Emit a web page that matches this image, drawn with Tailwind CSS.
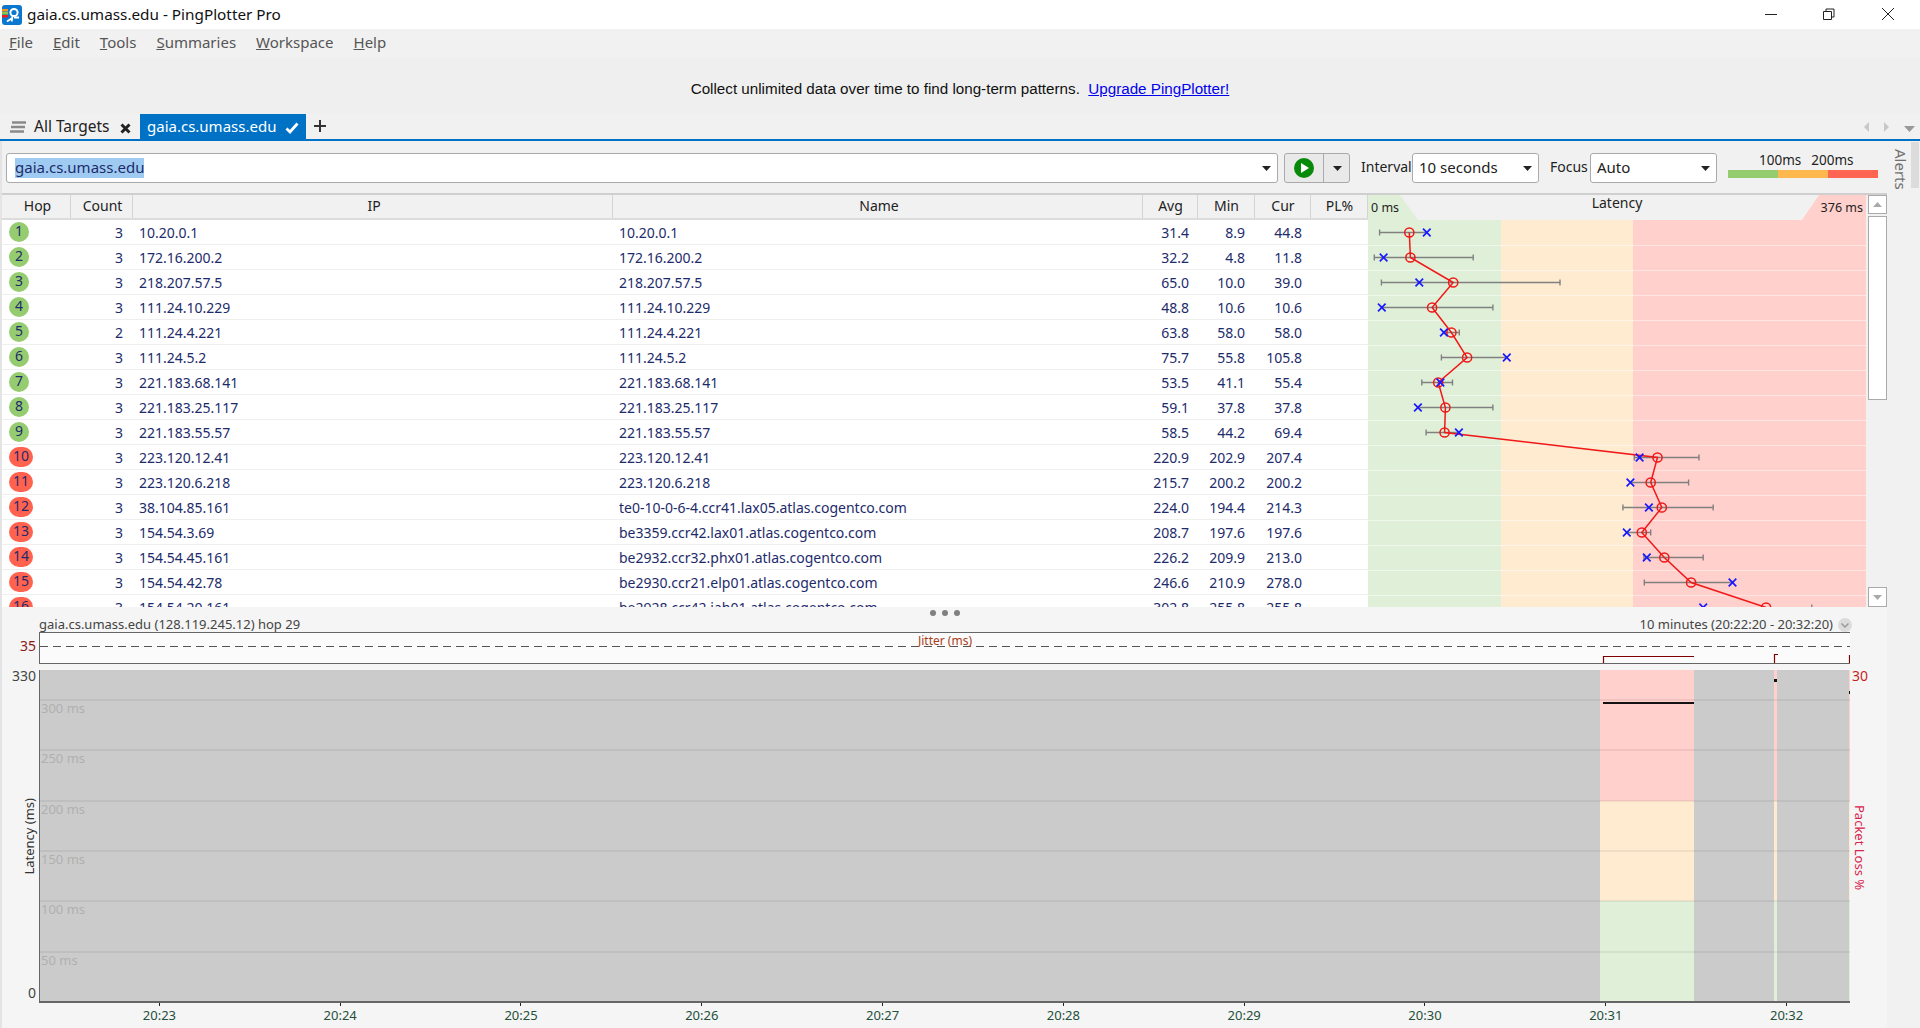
<!DOCTYPE html>
<html>
<head>
<meta charset="utf-8">
<script src="https://cdn.jsdelivr.net/npm/@tailwindcss/browser@4"></script>
</head>
<body class="m-0 bg-white overflow-hidden">
<div class="w-[1920px] h-[1028px] flex flex-col overflow-hidden font-['Noto_Sans',sans-serif] text-[14px] text-[#222]">

  <!-- title bar -->
  <div class="h-[29px] shrink-0 bg-white flex items-center relative">
    <svg class="ml-[2px] mr-[5px]" width="20" height="20" viewBox="0 0 20 20"><rect width="20" height="20" rx="3" fill="#0b78d0"/><rect x="0" y="4" width="6" height="2.5" fill="#f7941d"/><rect x="0" y="7" width="6" height="2.5" fill="#8dc63f"/><rect x="0" y="10" width="6" height="2.5" fill="#ed1c24"/><circle cx="12" cy="7.5" r="3.6" fill="none" stroke="#fff" stroke-width="2"/><path d="M10.500 11l-.8 5.500M9.500 13.500l-4.500 3M12 12.500h5" fill="none" stroke="#fff" stroke-width="1.800"/></svg>
    <span class="text-[15.3px] text-[#111]">gaia.cs.umass.edu - PingPlotter Pro</span>
    <div class="ml-auto flex items-center h-full">
      <svg width="58" height="29" viewBox="0 0 58 29"><path d="M6 14.500h12" stroke="#222" stroke-width="1"/></svg>
      <svg width="65" height="29" viewBox="0 0 65 29"><path d="M6.500 11.500h8v8h-8zM9 11.500V9h8v8h-2.500" fill="none" stroke="#222" stroke-width="1"/></svg>
      <svg width="38" height="29" viewBox="0 0 38 29"><path d="M0 8l12 12M12 8L0 20" stroke="#222" stroke-width="1"/></svg>
    </div>
  </div>

  <!-- menu -->
  <div class="h-[29px] shrink-0 bg-[#f1f1f1] flex items-center pl-[9px] pb-[2px] gap-[20px] text-[15px] text-[#555]">
    <span><u>F</u>ile</span><span><u>E</u>dit</span><span><u>T</u>ools</span><span><u>S</u>ummaries</span><span><u>W</u>orkspace</span><span><u>H</u>elp</span>
  </div>

  <!-- banner -->
  <div class="h-[56px] shrink-0 bg-[#efefef] flex items-center justify-center pt-[7px] font-['Liberation_Sans',sans-serif] text-[15.2px] text-[#111]">
    <span>Collect unlimited data over time to find long-term patterns.&nbsp; <a class="text-[#0000ee] underline">Upgrade PingPlotter!</a></span>
  </div>

  <!-- tabs -->
  <div class="h-[25px] shrink-0 bg-[#f1f1f1] flex items-stretch">
    <div class="w-[140px] flex items-center pl-[10px]">
      <svg width="16" height="12" viewBox="0 0 16 12" class="mr-[8px]"><path d="M2 1.500h14M1 6h14M0 10.500h14" stroke="#8a8a8a" stroke-width="2.400"/></svg>
      <span class="text-[15.5px] text-[#222] w-[86px]">All Targets</span>
      <svg width="11" height="11" viewBox="0 0 11 11" class="mt-[3px]"><path d="M1.500 1.500l8 8M9.500 1.500l-8 8" stroke="#222" stroke-width="3"/></svg>
    </div>
    <div class="w-[166px] bg-[#0072c6] flex items-center pl-[7px] text-white text-[15px]">
      <span class="w-[138px]">gaia.cs.umass.edu</span>
      <svg width="14" height="12" viewBox="0 0 14 12" class="mt-[3px]"><path d="M1.500 6.500l3.500 3.500 7.500-8.500" fill="none" stroke="#fff" stroke-width="2.800"/></svg>
    </div>
    <svg width="14" height="14" viewBox="0 0 14 14" class="ml-[7px] mt-[5px]"><path d="M7 1v12M1 7h12" stroke="#333" stroke-width="2"/></svg>
    <div class="ml-auto flex items-center pr-[5px] gap-[14px] pt-[1px]">
      <svg width="6" height="10" viewBox="0 0 6 10"><path d="M5 0v10L0 5z" fill="#c8c8c8"/></svg>
      <svg width="6" height="10" viewBox="0 0 6 10"><path d="M0 0v10l5-5z" fill="#c8c8c8"/></svg>
      <svg width="11" height="6" viewBox="0 0 11 6" class="mt-[4px]"><path d="M0 0h11L5.500 6z" fill="#999"/></svg>
    </div>
  </div>
  <div class="h-[2px] shrink-0 bg-[#0072c6]"></div>

  <!-- workspace -->
  <div class="flex-1 flex min-h-0">
    <div class="w-[1887px] flex flex-col border-l-2 border-[#e4e4e4] bg-[#f1f1f1]">

      <!-- toolbar -->
      <div class="h-[52px] shrink-0 flex items-start pt-[12px] pl-[4px]">
        <div class="w-[1272px] h-[30px] bg-white border border-[#aaa] rounded-[3px] flex items-center pl-[8px] pr-[6px] text-[15px] text-[#1d2b6b]">
          <span class="bg-[#9fcbf2] h-[20px] leading-[19px]">gaia.cs.umass.edu</span>
          <svg class="ml-auto" width="9" height="5" viewBox="0 0 9 5"><path d="M0 0h9L4.500 5z" fill="#222"/></svg>
        </div>
        <div class="ml-[6px] w-[66px] h-[30px] bg-[#e9e9e9] border border-[#aaa] rounded-[3px] flex items-center">
          <div class="w-[39px] h-full border-r border-[#aaa] flex items-center justify-center">
            <svg width="20" height="20" viewBox="0 0 20 20"><circle cx="10" cy="10" r="10" fill="#078a0a"/><path d="M7 5l8 5-8 5z" fill="#fff"/></svg>
          </div>
          <svg class="ml-[9px]" width="9" height="5" viewBox="0 0 9 5"><path d="M0 0h9L4.500 5z" fill="#222"/></svg>
        </div>
        <span class="ml-[11px] w-[51px] leading-[28px] text-[14px] text-[#222]">Interval</span>
        <div class="w-[127px] h-[30px] bg-white border border-[#aaa] rounded-[3px] flex items-center pl-[6px] pr-[6px] pb-[2px] text-[15px] text-[#222]">
          <span>10 seconds</span>
          <svg class="ml-auto mt-[2px]" width="9" height="5" viewBox="0 0 9 5"><path d="M0 0h9L4.500 5z" fill="#222"/></svg>
        </div>
        <span class="ml-[11px] w-[40px] leading-[28px] text-[14px] text-[#222]">Focus</span>
        <div class="w-[127px] h-[30px] bg-white border border-[#aaa] rounded-[3px] flex items-center pl-[6px] pr-[6px] pb-[2px] text-[15px] text-[#222]">
          <span>Auto</span>
          <svg class="ml-auto mt-[2px]" width="9" height="5" viewBox="0 0 9 5"><path d="M0 0h9L4.500 5z" fill="#222"/></svg>
        </div>
        <div class="ml-[11px] w-[150px] -mt-[2px] flex flex-col">
          <div class="h-[18px] flex pl-[31px] gap-[10px] text-[13.5px] leading-[18px] text-[#222]"><span>100ms</span><span>200ms</span></div>
          <div class="h-[8px] mt-[1px] flex"><div class="w-[50px] bg-[#96cc70]"></div><div class="w-[50px] bg-[#ffb84d]"></div><div class="w-[50px] bg-[#ff6550]"></div></div>
        </div>
      </div>

      <!-- table -->
      <div class="h-[414px] shrink-0 border-t-2 border-[#cfcfcf] flex overflow-hidden">
        <div class="w-[1366px] shrink-0 flex flex-col bg-white text-[#1d2b6b]">
          <div class="grid grid-cols-[69px_62px_480px_530px_55px_57px_56px_57px] h-[25px] shrink-0 bg-[#f1f1f1] border-b-2 border-[#dcdcdc] text-[#222] items-stretch text-center leading-[22px]">
            <div class="border-r border-[#d4d4d4] pl-[3px]">Hop</div><div class="border-r border-[#d4d4d4] pl-[2px]">Count</div><div class="border-r border-[#d4d4d4] pl-[3px]">IP</div><div class="border-r border-[#d4d4d4] pl-[3px]">Name</div><div class="border-r border-[#d4d4d4] pl-[1px]">Avg</div><div class="border-r border-[#d4d4d4] pl-[1px]">Min</div><div class="border-r border-[#d4d4d4] pl-[1px]">Cur</div><div class="border-r border-[#d4d4d4] pl-[1px]">PL%</div>
          </div>
          <div class="grid grid-cols-[69px_62px_480px_530px_55px_57px_56px_57px] h-[25px] shrink-0 border-b border-[#efefef] items-center"><div class="pl-[7px]"><div class="w-[20px] h-[20px] rounded-full bg-[#96cc70] text-center leading-[17px]">1</div></div><div class="text-right pr-[10px]">3</div><div class="pl-[6px]">10.20.0.1</div><div class="pl-[6px]">10.20.0.1</div><div class="text-right pr-[9px]">31.4</div><div class="text-right pr-[10px]">8.9</div><div class="text-right pr-[9px]">44.8</div><div></div></div>
          <div class="grid grid-cols-[69px_62px_480px_530px_55px_57px_56px_57px] h-[25px] shrink-0 border-b border-[#efefef] items-center"><div class="pl-[7px]"><div class="w-[20px] h-[20px] rounded-full bg-[#96cc70] text-center leading-[17px]">2</div></div><div class="text-right pr-[10px]">3</div><div class="pl-[6px]">172.16.200.2</div><div class="pl-[6px]">172.16.200.2</div><div class="text-right pr-[9px]">32.2</div><div class="text-right pr-[10px]">4.8</div><div class="text-right pr-[9px]">11.8</div><div></div></div>
          <div class="grid grid-cols-[69px_62px_480px_530px_55px_57px_56px_57px] h-[25px] shrink-0 border-b border-[#efefef] items-center"><div class="pl-[7px]"><div class="w-[20px] h-[20px] rounded-full bg-[#96cc70] text-center leading-[17px]">3</div></div><div class="text-right pr-[10px]">3</div><div class="pl-[6px]">218.207.57.5</div><div class="pl-[6px]">218.207.57.5</div><div class="text-right pr-[9px]">65.0</div><div class="text-right pr-[10px]">10.0</div><div class="text-right pr-[9px]">39.0</div><div></div></div>
          <div class="grid grid-cols-[69px_62px_480px_530px_55px_57px_56px_57px] h-[25px] shrink-0 border-b border-[#efefef] items-center"><div class="pl-[7px]"><div class="w-[20px] h-[20px] rounded-full bg-[#96cc70] text-center leading-[17px]">4</div></div><div class="text-right pr-[10px]">3</div><div class="pl-[6px]">111.24.10.229</div><div class="pl-[6px]">111.24.10.229</div><div class="text-right pr-[9px]">48.8</div><div class="text-right pr-[10px]">10.6</div><div class="text-right pr-[9px]">10.6</div><div></div></div>
          <div class="grid grid-cols-[69px_62px_480px_530px_55px_57px_56px_57px] h-[25px] shrink-0 border-b border-[#efefef] items-center"><div class="pl-[7px]"><div class="w-[20px] h-[20px] rounded-full bg-[#96cc70] text-center leading-[17px]">5</div></div><div class="text-right pr-[10px]">2</div><div class="pl-[6px]">111.24.4.221</div><div class="pl-[6px]">111.24.4.221</div><div class="text-right pr-[9px]">63.8</div><div class="text-right pr-[10px]">58.0</div><div class="text-right pr-[9px]">58.0</div><div></div></div>
          <div class="grid grid-cols-[69px_62px_480px_530px_55px_57px_56px_57px] h-[25px] shrink-0 border-b border-[#efefef] items-center"><div class="pl-[7px]"><div class="w-[20px] h-[20px] rounded-full bg-[#96cc70] text-center leading-[17px]">6</div></div><div class="text-right pr-[10px]">3</div><div class="pl-[6px]">111.24.5.2</div><div class="pl-[6px]">111.24.5.2</div><div class="text-right pr-[9px]">75.7</div><div class="text-right pr-[10px]">55.8</div><div class="text-right pr-[9px]">105.8</div><div></div></div>
          <div class="grid grid-cols-[69px_62px_480px_530px_55px_57px_56px_57px] h-[25px] shrink-0 border-b border-[#efefef] items-center"><div class="pl-[7px]"><div class="w-[20px] h-[20px] rounded-full bg-[#96cc70] text-center leading-[17px]">7</div></div><div class="text-right pr-[10px]">3</div><div class="pl-[6px]">221.183.68.141</div><div class="pl-[6px]">221.183.68.141</div><div class="text-right pr-[9px]">53.5</div><div class="text-right pr-[10px]">41.1</div><div class="text-right pr-[9px]">55.4</div><div></div></div>
          <div class="grid grid-cols-[69px_62px_480px_530px_55px_57px_56px_57px] h-[25px] shrink-0 border-b border-[#efefef] items-center"><div class="pl-[7px]"><div class="w-[20px] h-[20px] rounded-full bg-[#96cc70] text-center leading-[17px]">8</div></div><div class="text-right pr-[10px]">3</div><div class="pl-[6px]">221.183.25.117</div><div class="pl-[6px]">221.183.25.117</div><div class="text-right pr-[9px]">59.1</div><div class="text-right pr-[10px]">37.8</div><div class="text-right pr-[9px]">37.8</div><div></div></div>
          <div class="grid grid-cols-[69px_62px_480px_530px_55px_57px_56px_57px] h-[25px] shrink-0 border-b border-[#efefef] items-center"><div class="pl-[7px]"><div class="w-[20px] h-[20px] rounded-full bg-[#96cc70] text-center leading-[17px]">9</div></div><div class="text-right pr-[10px]">3</div><div class="pl-[6px]">221.183.55.57</div><div class="pl-[6px]">221.183.55.57</div><div class="text-right pr-[9px]">58.5</div><div class="text-right pr-[10px]">44.2</div><div class="text-right pr-[9px]">69.4</div><div></div></div>
          <div class="grid grid-cols-[69px_62px_480px_530px_55px_57px_56px_57px] h-[25px] shrink-0 border-b border-[#efefef] items-center"><div class="pl-[7px]"><div class="w-[24px] h-[20px] rounded-full bg-[#ff6350] text-center leading-[17px]">10</div></div><div class="text-right pr-[10px]">3</div><div class="pl-[6px]">223.120.12.41</div><div class="pl-[6px]">223.120.12.41</div><div class="text-right pr-[9px]">220.9</div><div class="text-right pr-[10px]">202.9</div><div class="text-right pr-[9px]">207.4</div><div></div></div>
          <div class="grid grid-cols-[69px_62px_480px_530px_55px_57px_56px_57px] h-[25px] shrink-0 border-b border-[#efefef] items-center"><div class="pl-[7px]"><div class="w-[24px] h-[20px] rounded-full bg-[#ff6350] text-center leading-[17px]">11</div></div><div class="text-right pr-[10px]">3</div><div class="pl-[6px]">223.120.6.218</div><div class="pl-[6px]">223.120.6.218</div><div class="text-right pr-[9px]">215.7</div><div class="text-right pr-[10px]">200.2</div><div class="text-right pr-[9px]">200.2</div><div></div></div>
          <div class="grid grid-cols-[69px_62px_480px_530px_55px_57px_56px_57px] h-[25px] shrink-0 border-b border-[#efefef] items-center"><div class="pl-[7px]"><div class="w-[24px] h-[20px] rounded-full bg-[#ff6350] text-center leading-[17px]">12</div></div><div class="text-right pr-[10px]">3</div><div class="pl-[6px]">38.104.85.161</div><div class="pl-[6px]">te0-10-0-6-4.ccr41.lax05.atlas.cogentco.com</div><div class="text-right pr-[9px]">224.0</div><div class="text-right pr-[10px]">194.4</div><div class="text-right pr-[9px]">214.3</div><div></div></div>
          <div class="grid grid-cols-[69px_62px_480px_530px_55px_57px_56px_57px] h-[25px] shrink-0 border-b border-[#efefef] items-center"><div class="pl-[7px]"><div class="w-[24px] h-[20px] rounded-full bg-[#ff6350] text-center leading-[17px]">13</div></div><div class="text-right pr-[10px]">3</div><div class="pl-[6px]">154.54.3.69</div><div class="pl-[6px]">be3359.ccr42.lax01.atlas.cogentco.com</div><div class="text-right pr-[9px]">208.7</div><div class="text-right pr-[10px]">197.6</div><div class="text-right pr-[9px]">197.6</div><div></div></div>
          <div class="grid grid-cols-[69px_62px_480px_530px_55px_57px_56px_57px] h-[25px] shrink-0 border-b border-[#efefef] items-center"><div class="pl-[7px]"><div class="w-[24px] h-[20px] rounded-full bg-[#ff6350] text-center leading-[17px]">14</div></div><div class="text-right pr-[10px]">3</div><div class="pl-[6px]">154.54.45.161</div><div class="pl-[6px]">be2932.ccr32.phx01.atlas.cogentco.com</div><div class="text-right pr-[9px]">226.2</div><div class="text-right pr-[10px]">209.9</div><div class="text-right pr-[9px]">213.0</div><div></div></div>
          <div class="grid grid-cols-[69px_62px_480px_530px_55px_57px_56px_57px] h-[25px] shrink-0 border-b border-[#efefef] items-center"><div class="pl-[7px]"><div class="w-[24px] h-[20px] rounded-full bg-[#ff6350] text-center leading-[17px]">15</div></div><div class="text-right pr-[10px]">3</div><div class="pl-[6px]">154.54.42.78</div><div class="pl-[6px]">be2930.ccr21.elp01.atlas.cogentco.com</div><div class="text-right pr-[9px]">246.6</div><div class="text-right pr-[10px]">210.9</div><div class="text-right pr-[9px]">278.0</div><div></div></div>
          <div class="grid grid-cols-[69px_62px_480px_530px_55px_57px_56px_57px] h-[25px] shrink-0 border-b border-[#efefef] items-center"><div class="pl-[7px]"><div class="w-[24px] h-[20px] rounded-full bg-[#ff6350] text-center leading-[17px]">16</div></div><div class="text-right pr-[10px]">3</div><div class="pl-[6px]">154.54.20.161</div><div class="pl-[6px]">be2928.ccr42.iah01.atlas.cogentco.com</div><div class="text-right pr-[9px]">302.8</div><div class="text-right pr-[10px]">255.8</div><div class="text-right pr-[9px]">255.8</div><div></div></div>
        </div>

        <!-- latency chart -->
        <div class="w-[498px] shrink-0 flex flex-col">
          <div class="h-[25px] shrink-0 relative bg-[#f1f1f1] text-[#222]">
            <svg class="absolute inset-0" width="498" height="25" viewBox="0 0 498 25"><path d="M0 0H32L50 25H0z" fill="#e0f0d8"/><path d="M451 0H498V25H434z" fill="#ffd0cc"/></svg>
            <div class="absolute left-[3px] top-[3px] text-[12.5px] leading-[20px]">0 ms</div>
            <div class="absolute inset-x-0 top-[-2px] text-center leading-[20px]">Latency</div>
            <div class="absolute right-[3px] top-[3px] text-[12.5px] leading-[20px]">376 ms</div>
          </div>
          <svg width="498" height="387" viewBox="0 0 498 387" class="block">
            <defs><path id="xm" d="M-3.800-3.800l7.600 7.600m0-7.600l-7.600 7.600" fill="none" stroke="#1a1aff" stroke-width="1.700"/></defs>
            <rect x="0" y="0" width="133" height="387" fill="#e0f0d8"/>
            <rect x="133" y="0" width="132" height="387" fill="#ffebd0"/>
            <rect x="265" y="0" width="233" height="387" fill="#ffd0cc"/>
            <path d="M0 25.500H498M0 50.500H498M0 75.500H498M0 100.500H498M0 125.500H498M0 150.500H498M0 175.500H498M0 200.500H498M0 225.500H498M0 250.500H498M0 275.500H498M0 300.500H498M0 325.500H498M0 350.500H498M0 375.500H498" stroke="#fff" stroke-opacity=".45"/>
            <path d="M11.600 12.500H58.800M11.600 9.500v6M6.300 37.500H105.200M6.300 34.500v6M105.200 34.500v6M13.400 62.500H192M13.400 59.500v6M192 59.500v6M13.800 87.500H124.900M124.900 84.500v6M75.900 112.500H91.300M91.300 109.500v6M73.400 137.500H138.800M73.400 134.500v6M53.800 162.500H84.500M53.800 159.500v6M84.500 159.500v6M49.900 187.500H124.900M124.900 184.500v6M58.100 212.500H90.900M58.100 209.500v6M266.300 237.500H331M266.300 234.500v6M331 234.500v6M262.400 262.500H320.600M320.600 259.500v6M254.900 287.500H345.200M254.900 284.500v6M345.200 284.500v6M258.800 312.500H282.700M282.700 309.500v6M275.900 337.500H335.200M275.900 334.500v6M335.200 334.500v6M276.300 362.500H364.500M276.300 359.500v6M443.800 384.500v6" fill="none" stroke="#808080" stroke-width="1.400"/>
            <polyline points="41.300,12.500 42.400,37.500 85.200,62.500 64.100,87.500 83.400,112.500 99.100,137.500 70.200,162.500 77.400,187.500 76.600,212.500 289.500,237.500 282.700,262.500 293.800,287.500 273.800,312.500 296.300,337.500 323.100,362.500 398.100,387.500" fill="none" stroke="#f01818" stroke-width="1.500"/>
            <g fill="none" stroke="#f01818" stroke-width="1.500">
              <circle cx="41.300" cy="12.500" r="4.600"/><circle cx="42.400" cy="37.500" r="4.600"/><circle cx="85.200" cy="62.500" r="4.600"/><circle cx="64.100" cy="87.500" r="4.600"/><circle cx="83.400" cy="112.500" r="4.600"/><circle cx="99.100" cy="137.500" r="4.600"/><circle cx="70.200" cy="162.500" r="4.600"/><circle cx="77.400" cy="187.500" r="4.600"/><circle cx="76.600" cy="212.500" r="4.600"/><circle cx="289.500" cy="237.500" r="4.600"/><circle cx="282.700" cy="262.500" r="4.600"/><circle cx="293.800" cy="287.500" r="4.600"/><circle cx="273.800" cy="312.500" r="4.600"/><circle cx="296.300" cy="337.500" r="4.600"/><circle cx="323.100" cy="362.500" r="4.600"/><circle cx="398.100" cy="387.500" r="4.600"/>
            </g>
            <use href="#xm" x="58.800" y="12.500"/><use href="#xm" x="15.600" y="37.500"/><use href="#xm" x="51.300" y="62.500"/><use href="#xm" x="13.800" y="87.500"/><use href="#xm" x="75.900" y="112.500"/><use href="#xm" x="138.800" y="137.500"/><use href="#xm" x="72.400" y="162.500"/><use href="#xm" x="49.900" y="187.500"/><use href="#xm" x="90.900" y="212.500"/><use href="#xm" x="271.600" y="237.500"/><use href="#xm" x="262.400" y="262.500"/><use href="#xm" x="280.900" y="287.500"/><use href="#xm" x="258.800" y="312.500"/><use href="#xm" x="278.800" y="337.500"/><use href="#xm" x="364.500" y="362.500"/><use href="#xm" x="335.200" y="387.500"/>
          </svg>
        </div>

        <!-- scrollbar -->
        <div class="w-[21px] shrink-0 pl-[2px] flex flex-col bg-[#f1f1f1]">
          <div class="h-[19px] shrink-0 bg-white border border-[#aaa] flex items-center justify-center"><svg width="9" height="5" viewBox="0 0 9 5"><path d="M4.500 0L9 5H0z" fill="#aaa"/></svg></div>
          <div class="h-[184px] mt-[2px] shrink-0 bg-white border border-[#aaa]"></div>
          <div class="h-[20px] mt-[187px] shrink-0 bg-white border border-[#aaa] flex items-center justify-center"><svg width="9" height="5" viewBox="0 0 9 5"><path d="M0 0h9L4.500 5z" fill="#aaa"/></svg></div>
        </div>
      </div>

      <!-- lower graphs -->
      <div class="flex-1 bg-[#f5f5f5] flex flex-col min-h-0">
        <div class="h-[10px] shrink-0 flex items-center justify-center gap-[6px] pt-[1px]"><div class="w-[6px] h-[6px] rounded-full bg-[#808080]"></div><div class="w-[6px] h-[6px] rounded-full bg-[#808080]"></div><div class="w-[6px] h-[6px] rounded-full bg-[#808080]"></div></div>
        <div class="h-[15px] shrink-0 flex items-center pl-[37px] pr-[35px] text-[13px] text-[#444]">
          <span>gaia.cs.umass.edu (128.119.245.12) hop 29</span>
          <span class="ml-auto mr-[5px]">10 minutes (20:22:20 - 20:32:20)</span>
          <svg width="14" height="14" viewBox="0 0 14 14"><circle cx="7" cy="7" r="7" fill="#dcdcdc"/><path d="M3.500 5.500L7 9l3.500-3.500" fill="none" stroke="#999" stroke-width="1.500"/></svg>
        </div>
        <!-- jitter -->
        <div class="h-[32px] shrink-0 flex">
          <div class="w-[37px] shrink-0 text-right pr-[3px] text-[14px] leading-[28px] text-[#8b1a1a]">35</div>
          <div class="w-[1811px] shrink-0 relative overflow-hidden bg-[#fbfbfb] border-y border-l border-[#666]">
            <svg class="absolute left-0 top-0" width="1810" height="30" viewBox="0 0 1810 30"><path d="M0 13.500H1810" stroke="#555" stroke-dasharray="8 5"/><path d="M1563.500 30v-6.500H1654M1734.500 30V21.500H1738M1809.500 30V22" fill="none" stroke="#800000" stroke-width="1.200"/></svg>
            <div class="absolute inset-x-0 top-0 text-center text-[12px] leading-[16px] text-[#a8401a]">Jitter (ms)</div>
          </div>
        </div>
        <!-- main chart -->
        <div class="h-[333px] mt-[6px] shrink-0 flex">
          <div class="w-[37px] shrink-0 relative flex flex-col justify-between items-end pr-[3px] text-[14px] text-[#444] leading-[18px] pb-[1px]">
            <span class="-mt-[3px]">330</span><span>0</span>
            <div class="absolute inset-y-0 left-[18px] flex items-center"><span class="[writing-mode:vertical-rl] rotate-180 text-[13px] text-[#333]">Latency (ms)</span></div>
          </div>
          <div class="w-[1811px] shrink-0 border-l border-b-2 border-[#666] bg-[#cbcbcb]">
            <svg width="1810" height="331" viewBox="0 0 1810 331" class="block">
              <rect x="1560" y="0" width="94" height="131" fill="#ffd0cc"/><rect x="1560" y="131" width="94" height="100" fill="#ffebd0"/><rect x="1560" y="231" width="94" height="100" fill="#e0f0d8"/>
              <rect x="1734" y="0" width="3" height="131" fill="#ffd0cc"/><rect x="1734" y="131" width="3" height="100" fill="#ffebd0"/><rect x="1734" y="231" width="3" height="100" fill="#e0f0d8"/>
              <rect x="1809" y="0" width="1" height="131" fill="#ffd0cc"/><rect x="1809" y="131" width="1" height="100" fill="#ffebd0"/><rect x="1809" y="231" width="1" height="100" fill="#e0f0d8"/>
              <path d="M0 30H1810M0 80H1810M0 131H1810M0 181H1810M0 231H1810M0 282H1810" stroke="#000" stroke-opacity=".06" stroke-width="2"/>
              <path d="M1563 33H1654" stroke="#111" stroke-width="2"/>
              <rect x="1734" y="9" width="3" height="3" fill="#111"/><rect x="1809" y="21" width="1" height="3" fill="#111"/>
              <g font-size="13" fill="#b0b0b0"><text x="1" y="43">300 ms</text><text x="1" y="93">250 ms</text><text x="1" y="144">200 ms</text><text x="1" y="194">150 ms</text><text x="1" y="244">100 ms</text><text x="1" y="295">50 ms</text></g>
            </svg>
          </div>
          <div class="relative flex-1 text-[14px] leading-[18px] text-[#c81e1e] pl-[2px]">
            <span class="block -mt-[3px]">30</span>
            <div class="absolute top-[135px] left-[2px] [writing-mode:vertical-rl] text-[13px] leading-[16px] text-[#d8234a]">Packet Loss %</div>
          </div>
        </div>
        <!-- time axis -->
        <div class="flex pl-[67px] text-[13px] text-[#24503a]">
          <div class="w-[180.8px] flex flex-col items-center"><div class="w-px h-[3px] bg-[#222]"></div><span class="leading-[18px]">20:23</span></div>
          <div class="w-[180.8px] flex flex-col items-center"><div class="w-px h-[3px] bg-[#222]"></div><span class="leading-[18px]">20:24</span></div>
          <div class="w-[180.8px] flex flex-col items-center"><div class="w-px h-[3px] bg-[#222]"></div><span class="leading-[18px]">20:25</span></div>
          <div class="w-[180.8px] flex flex-col items-center"><div class="w-px h-[3px] bg-[#222]"></div><span class="leading-[18px]">20:26</span></div>
          <div class="w-[180.8px] flex flex-col items-center"><div class="w-px h-[3px] bg-[#222]"></div><span class="leading-[18px]">20:27</span></div>
          <div class="w-[180.8px] flex flex-col items-center"><div class="w-px h-[3px] bg-[#222]"></div><span class="leading-[18px]">20:28</span></div>
          <div class="w-[180.8px] flex flex-col items-center"><div class="w-px h-[3px] bg-[#222]"></div><span class="leading-[18px]">20:29</span></div>
          <div class="w-[180.8px] flex flex-col items-center"><div class="w-px h-[3px] bg-[#222]"></div><span class="leading-[18px]">20:30</span></div>
          <div class="w-[180.8px] flex flex-col items-center"><div class="w-px h-[3px] bg-[#222]"></div><span class="leading-[18px]">20:31</span></div>
          <div class="w-[180.8px] flex flex-col items-center"><div class="w-px h-[3px] bg-[#222]"></div><span class="leading-[18px]">20:32</span></div>
        </div>
      </div>
    </div>

    <!-- right strip -->
    <div class="w-[33px] shrink-0 bg-[#f1f1f1] flex items-start">
      <div class="ml-[6px] mt-[8px] w-[16px] [writing-mode:vertical-rl] text-[15px] leading-[16px] text-[#707070]">Alerts</div>
      <div class="ml-[2px] mt-[1px] w-[8px] h-[46px] bg-[#dcdcdc]"></div>
    </div>
  </div>
</div>
</body>
</html>
